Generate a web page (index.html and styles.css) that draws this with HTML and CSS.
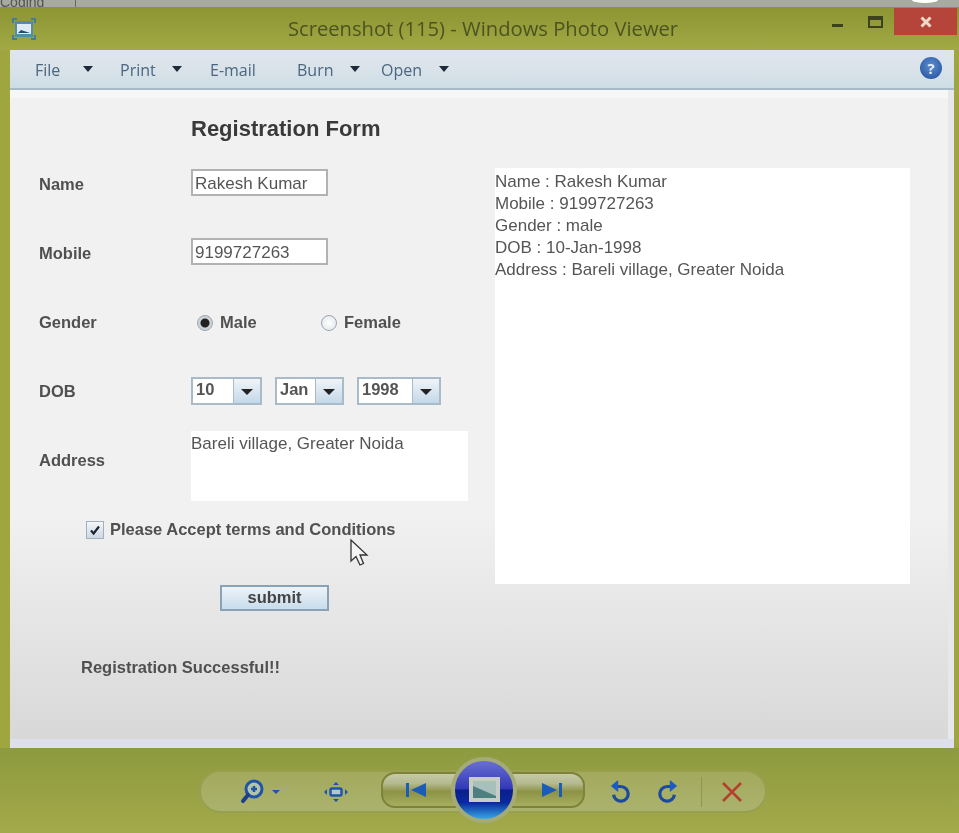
FILE: index.html
```html
<!DOCTYPE html>
<html lang="en">

<head>
  <meta charset="UTF-8">
  <title>Screenshot (115) - Windows Photo Viewer</title>
  <link rel="stylesheet" href="styles.css">
</head>

<body>
  <div class="top-strip"><span>Coding</span><i class="strip-tick"></i><i class="strip-blob"></i></div>

  <header class="titlebar">
    <svg class="app-icon" width="24" height="22" viewBox="0 0 24 22">
      <path d="M1 5 V1 H5 M19 1 H23 V5 M23 17 V21 H19 M5 21 H1 V17" fill="none" stroke="#3f7f98" stroke-width="2" />
      <rect x="3" y="3" width="18" height="16" fill="#4f8fa8" />
      <rect x="5" y="6" width="14" height="10" fill="#dfeaf0" />
      <path d="M6 15 L9 12 L18 15 Z" fill="#1f4f78" />
    </svg>
    <h1 class="window-title">Screenshot (115) - Windows Photo Viewer</h1>
    <div class="window-btns">
      <span class="min-btn"></span>
      <span class="max-btn"></span>
      <span class="close-btn">
        <svg width="14" height="14" viewBox="0 0 14 14">
          <path d="M2.500 2.500 L11.500 11.500 M11.500 2.500 L2.500 11.500" stroke="#ecdcc8" stroke-width="3" />
        </svg>
      </span>
    </div>
  </header>

  <div class="window-body">
    <nav class="toolbar">
      <span class="menu-item menu-file">File<i class="caret"></i></span>
      <span class="menu-item menu-print">Print<i class="caret"></i></span>
      <span class="menu-item menu-email">E-mail</span>
      <span class="menu-item menu-burn">Burn<i class="caret"></i></span>
      <span class="menu-item menu-open">Open<i class="caret"></i></span>
      <span class="help-btn">?</span>
    </nav>

    <main class="content">
      <form class="reg-form">
        <h2 class="form-title">Registration Form</h2>

        <div class="form-row">
          <label class="field-label">Name</label>
          <input class="text-input" value="Rakesh Kumar">
        </div>
        <div class="form-row">
          <label class="field-label">Mobile</label>
          <input class="text-input" value="9199727263">
        </div>
        <div class="form-row">
          <label class="field-label">Gender</label>
          <div class="radio-group">
            <span class="radio-item radio-male"><i class="radio radio-on"></i>Male</span>
            <span class="radio-item"><i class="radio"></i>Female</span>
          </div>
        </div>
        <div class="form-row">
          <label class="field-label">DOB</label>
          <div class="combo-group">
            <span class="combo combo-day"><b>10</b><i class="combo-arrow"></i></span>
            <span class="combo combo-month"><b>Jan</b><i class="combo-arrow"></i></span>
            <span class="combo combo-year"><b>1998</b><i class="combo-arrow"></i></span>
          </div>
        </div>
        <div class="form-row">
          <label class="field-label">Address</label>
          <div class="address-box">Bareli village, Greater Noida</div>
        </div>

        <div class="terms-row">
          <span class="checkbox">
            <svg width="12" height="12" viewBox="0 0 12 12">
              <path d="M2 6.500 L4.600 9.500 L10 2.500" fill="none" stroke="#1d2530" stroke-width="2.200" />
            </svg>
          </span>
          Please Accept terms and Conditions
          <svg class="cursor" width="22" height="30" viewBox="0 0 22 30">
            <path d="M2 2 L2 23 L7 18.500 L11 27 L14.500 25.500 L11 17 L18 17 Z" fill="#f4f4f4" stroke="#333" stroke-width="1.300" />
          </svg>
        </div>
        <div class="submit-row"><button type="button" class="submit-btn">submit</button></div>
        <p class="status-msg">Registration Successful!!</p>
      </form>

      <pre class="result-box">Name : Rakesh Kumar
Mobile : 9199727263
Gender : male
DOB : 10-Jan-1998
Address : Bareli village, Greater Noida</pre>
    </main>
  </div>

  <footer class="dock">
    <div class="dock-pill">
      <svg class="dock-zoom" width="44" height="28" viewBox="0 0 44 28">
        <circle cx="15" cy="11" r="8" fill="#b4c4a8" stroke="#1f55a8" stroke-width="3" />
        <path d="M12 11 H18 M15 8 V14" stroke="#1f55a8" stroke-width="2.500" />
        <path d="M9 17 L4 23" stroke="#1d3f8a" stroke-width="4" stroke-linecap="round" />
        <path d="M33 12 H41 L37 16 Z" fill="#1f55a8" />
      </svg>
      <svg class="dock-fit" width="28" height="28" viewBox="0 0 28 28">
        <rect x="8.500" y="10.500" width="11" height="7" rx="1.500" fill="#b4c8c8" stroke="#1f55a8" stroke-width="2.500" />
        <path d="M14 4 L17 7 H11 Z M14 24 L17 21 H11 Z M2 14 L5 11 V17 Z M26 14 L23 11 V17 Z" fill="#1f55a8" />
      </svg>
      <span class="nav-btn nav-prev">
        <svg width="22" height="16" viewBox="0 0 22 16">
          <path d="M1 1 H4 V15 H1 Z M21 1 V15 L6 8 Z" fill="#1a5cb8" />
        </svg>
      </span>
      <span class="slideshow-btn">
        <span class="slideshow-screen">
          <svg width="31" height="25" viewBox="0 0 31 25">
            <rect width="31" height="25" fill="#c8ccc6" />
            <rect x="4" y="4" width="23" height="17" fill="#a8c0bc" />
            <path d="M4 9 L27 19 V21 H4 Z" fill="#4b7f80" />
          </svg>
        </span>
      </span>
      <span class="nav-btn nav-next">
        <svg width="22" height="16" viewBox="0 0 22 16">
          <path d="M1 1 V15 L16 8 Z M18 1 H21 V15 H18 Z" fill="#1a5cb8" />
        </svg>
      </span>
      <svg class="dock-rotate-left" width="22" height="24" viewBox="0 0 24 26">
        <path d="M8 7 H13 A8 8 0 1 1 5 16" fill="none" stroke="#1c4aa0" stroke-width="3.500" />
        <path d="M10 0 V13 L2 6.500 Z" fill="#1c5cc0" />
      </svg>
      <svg class="dock-rotate-right" width="22" height="24" viewBox="0 0 24 26">
        <path d="M16 7 H11 A8 8 0 1 0 19 16" fill="none" stroke="#1c4aa0" stroke-width="3.500" />
        <path d="M14 0 V13 L22 6.500 Z" fill="#1c5cc0" />
      </svg>
      <span class="dock-sep"></span>
      <svg class="dock-delete" width="22" height="22" viewBox="0 0 22 22">
        <path d="M2 2 L20 20 M20 2 L2 20" stroke="#b2402f" stroke-width="2.500" />
      </svg>
    </div>
  </footer>
</body>

</html>
```

FILE: styles.css
```css
* {
  box-sizing: border-box;
}

html {
  background: #9fa640;
}

body {
  background: #9fa640;
  display: flex;
  filter: blur(0.5px);
  flex-direction: column;
  font-family: "Liberation Sans", Arial, sans-serif;
  height: 833px;
  margin: 0;
  overflow: hidden;
  width: 959px;
}

.top-strip {
  background: #a8a8a4;
  color: #555;
  font-size: 14px;
  height: 7px;
  line-height: 4px;
  overflow: hidden;
  position: relative;
}

.strip-tick {
  background: #666;
  height: 7px;
  left: 75px;
  position: absolute;
  top: 0;
  width: 1px;
}

.strip-blob {
  background: #fff;
  border-radius: 50%;
  height: 6px;
  left: 912px;
  position: absolute;
  top: -3px;
  width: 26px;
}

.titlebar {
  align-items: center;
  background: linear-gradient(#8c9533, #a2a945);
  display: flex;
  height: 43px;
  padding: 0 2px 0 12px;
  position: relative;
}

.window-title {
  color: #4c5320;
  flex: 1;
  font-family: "Open Sans", sans-serif;
  font-size: 20.200px;
  font-weight: 400;
  margin: 0 0 2px;
  padding-left: 98px;
  text-align: center;
}

.window-btns {
  align-items: flex-start;
  align-self: flex-start;
  display: flex;
}

.min-btn {
  background: #3c4220;
  height: 3px;
  margin: 17px 25px 0 0;
  width: 11px;
}

.max-btn {
  border: 2px solid #3c4220;
  border-top-width: 4px;
  height: 12px;
  margin: 9px 11px 0 0;
  width: 15px;
}

.close-btn {
  align-items: center;
  background: #b5443a;
  display: flex;
  height: 27px;
  justify-content: center;
  margin-top: 1px;
  width: 63px;
}

.window-body {
  background: #e6e8ec;
  border-bottom: 9px solid #dde0ea;
  display: flex;
  flex-direction: column;
  height: 698px;
  margin: 0 5px 0 10px;
}

.toolbar {
  align-items: center;
  background: linear-gradient(#dfe5ee, #dbe3ea 45%, #cddde5);
  border-bottom: 2px solid #a6bac8;
  color: #4a6680;
  display: flex;
  flex: none;
  font-family: "Open Sans", sans-serif;
  font-size: 16px;
  height: 40px;
  padding: 2px 12px 0 25px;
}

.menu-item {
  align-items: center;
  display: flex;
}

.menu-file {
  width: 85px;
}

.menu-print {
  width: 90px;
}

.menu-email {
  width: 87px;
}

.menu-burn {
  width: 84px;
}

.caret {
  border-left: 5px solid transparent;
  border-right: 5px solid transparent;
  border-top: 6px solid #1d2a3a;
  margin-left: 23px;
  margin-top: -3px;
}

.menu-print .caret {
  margin-left: 16px;
}

.menu-burn .caret {
  margin-left: 16px;
}

.menu-open .caret {
  margin-left: 17px;
}

.help-btn {
  background: radial-gradient(circle at 50% 40%, #5d8ed0, #1f4c98);
  border-radius: 50%;
  color: #e8eef8;
  font-size: 15px;
  font-weight: 700;
  height: 22px;
  line-height: 22px;
  margin-left: auto;
  margin-top: -4px;
  text-align: center;
  width: 22px;
}

.content {
  background: linear-gradient(#f1f1f1 0, #f1f1f1 65%, #d8d8d8);
  border-top: 8px solid #f6f8f8;
  display: flex;
  flex: 1;
  margin-right: 6px;
  padding-left: 29px;
}

.reg-form {
  color: #505050;
  font-size: 16.500px;
  font-weight: 700;
  width: 456px;
}

.form-title {
  color: #3a3a3a;
  font-size: 22px;
  height: 52px;
  line-height: 62px;
  margin: 0 0 0 152px;
}

.form-row {
  align-items: center;
  display: grid;
  grid-template-columns: 152px 1fr;
  grid-template-rows: 69px;
  height: 69px;
}

.text-input {
  background: #fff;
  border: 2px solid #b0b2b4;
  color: #555;
  font-family: inherit;
  font-size: 17px;
  height: 27px;
  margin-top: -5px;
  padding: 3px 2px 0;
  width: 137px;
}

.radio-group {
  align-items: center;
  display: flex;
  padding-left: 6px;
}

.radio-item {
  align-items: center;
  display: flex;
}

.radio-male {
  width: 124px;
}

.radio {
  background: radial-gradient(circle, #fff, #dfe3e8);
  border: 1px solid #9aa6b0;
  border-radius: 50%;
  height: 16px;
  margin-right: 7px;
  width: 16px;
}

.radio-on {
  background: radial-gradient(circle, #222 0, #222 4px, #cfd3d8 5px);
}

.combo-group {
  display: flex;
  gap: 13px;
  margin-top: -2px;
}

.combo {
  background: #fff;
  border: 2px solid #a9bac8;
  color: #555;
  display: flex;
  height: 28px;
  justify-content: space-between;
  padding-left: 3px;
}

.combo b {
  line-height: 20px;
}

.combo-day {
  width: 71px;
}

.combo-month {
  width: 69px;
}

.combo-year {
  width: 84px;
}

.combo-arrow {
  background: linear-gradient(#f0f4f8, #c4d8e8);
  border-left: 1px solid #a9bac8;
  height: 100%;
  position: relative;
  width: 27px;
}

.combo-arrow::after {
  border-left: 6px solid transparent;
  border-right: 6px solid transparent;
  border-top: 6px solid #222;
  content: "";
  left: 7px;
  position: absolute;
  top: 10px;
}

.address-box {
  align-self: start;
  background: #fff;
  color: #555;
  font-size: 17px;
  font-weight: 400;
  height: 70px;
  line-height: 26px;
  margin-top: 5px;
  width: 277px;
}

.terms-row {
  align-items: center;
  display: flex;
  height: 69px;
  padding-left: 47px;
  position: relative;
}

.checkbox {
  align-items: center;
  background: linear-gradient(#f4f6f9, #ccd8e4);
  border: 1px solid #a2b0be;
  display: flex;
  height: 18px;
  justify-content: center;
  margin-right: 6px;
  width: 18px;
}

.cursor {
  left: 310px;
  position: absolute;
  top: 43px;
}

.submit-row {
  align-items: center;
  display: flex;
  height: 69px;
  padding: 0 0 2px 181px;
}

.submit-btn {
  background: linear-gradient(#eef3f8, #c8dcec);
  border: 2px solid #8aa2b6;
  color: #444;
  font-family: inherit;
  font-size: 16.500px;
  font-weight: 700;
  height: 26px;
  padding: 0;
  width: 109px;
}

.status-msg {
  height: 69px;
  line-height: 69px;
  margin: 0;
  padding-left: 42px;
}

.result-box {
  background: #fff;
  color: #555;
  font-family: inherit;
  font-size: 17px;
  height: 416px;
  line-height: 22px;
  margin: 70px 0 0 0;
  padding: 3px 0 0 0;
  width: 415px;
}

.dock {
  background: linear-gradient(#8d9a3f, #a3aa4a);
  display: flex;
  flex: 1;
  justify-content: flex-start;
  padding: 22px 0 0 199px;
}

.dock-pill {
  align-items: center;
  background: linear-gradient(#a3aa5e, #abb26c);
  border: 2px solid #98a050;
  border-radius: 22px;
  display: flex;
  height: 43px;
  width: 568px;
}

.dock-zoom {
  margin-left: 38px;
}

.dock-fit {
  margin-left: 39px;
}

.nav-btn {
  align-items: center;
  background: linear-gradient(#c6caa8, #b4b98e 30%, #8d9345 55%, #a8ae60);
  border: 2px solid #7d8338;
  display: flex;
  height: 36px;
  justify-content: center;
  margin-top: -4px;
  width: 76px;
}

.nav-prev {
  border-radius: 14px 0 0 14px;
  margin-left: 31px;
  padding-right: 6px;
}

.nav-next {
  border-radius: 0 14px 14px 0;
  padding-left: 8px;
  width: 74px;
}

.slideshow-btn {
  align-items: center;
  background: linear-gradient(#6a70d0, #3038b8 48%, #0a1e8c 50%, #0a2a9c 72%, #38a8e8);
  border: 4px solid #a4ab78;
  border-radius: 50%;
  display: flex;
  flex: none;
  height: 66px;
  justify-content: center;
  margin: -4px -6px 0;
  position: relative;
  width: 66px;
  z-index: 1;
}

.slideshow-screen {
  display: flex;
}

.dock-rotate-left {
  margin-left: 24px;
}

.dock-rotate-right {
  margin-left: 26px;
}

.dock-sep {
  background: #8f9650;
  height: 30px;
  margin-left: 22px;
  width: 1px;
}

.dock-delete {
  margin-left: 19px;
}
```
